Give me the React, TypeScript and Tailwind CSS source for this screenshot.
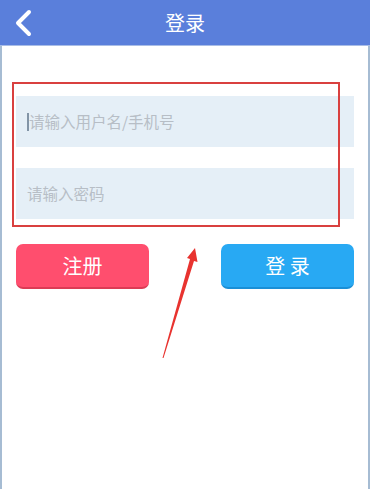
import React from "react";

export default function App() {
  const font = { fontFamily: '"Noto Sans CJK SC", "Noto Sans", sans-serif' };
  return (
    <div className="relative w-[370px] h-[489px] bg-white overflow-hidden" style={font}>
      <div className="h-[46px] bg-[#5a7fdb] border-b border-[#a9bde6] flex items-center relative">
        <svg className="absolute left-[13px] top-[9px]" width="20" height="28" viewBox="0 0 20 28">
          <path d="M16 3 L5 14 L16 25" fill="none" stroke="white" strokeWidth="4" strokeLinecap="round" strokeLinejoin="round" />
        </svg>
        <div className="w-full text-center text-white text-[20px] leading-none">登录</div>
      </div>
      <div className="h-[443px] border-l-2 border-r-2 border-[#a6bcd3] flex flex-col px-[14px]">
        <div className="mt-[50px] h-[51px] bg-[#e5eff7] flex items-center pl-[11px] text-[15.5px] text-[#b7bec6]">
          <span className="w-[2px] h-[18px] bg-[#8294a6]"></span>
          请输入用户名/手机号
        </div>
        <div className="mt-[21px] h-[51px] bg-[#e5eff7] flex items-center pl-[11px] text-[15.5px] text-[#b7bec6]">
          请输入密码
        </div>
        <div className="mt-[25px] flex justify-between">
          <div className="w-[133px] h-[45px] rounded-[7px] bg-[#ff4e6e] border-b-2 border-[#dc3b55] flex items-center justify-center text-white text-[20px]">
            注册
          </div>
          <div className="w-[133px] h-[45px] rounded-[7px] bg-[#28a9f3] border-b-2 border-[#1a8fd6] flex items-center justify-center text-white text-[20px]">
            登 录
          </div>
        </div>
      </div>
      <div className="absolute left-[12px] top-[82px] w-[328px] h-[145px] border-2 border-[#d9403f]"></div>
      <svg className="absolute left-0 top-0 pointer-events-none" width="370" height="489" viewBox="0 0 370 489">
        <polygon points="195,248 197.5,262 194,261 163.5,358 162.5,358 190,259 187,258" fill="#e8332f" />
      </svg>
    </div>
  );
}
